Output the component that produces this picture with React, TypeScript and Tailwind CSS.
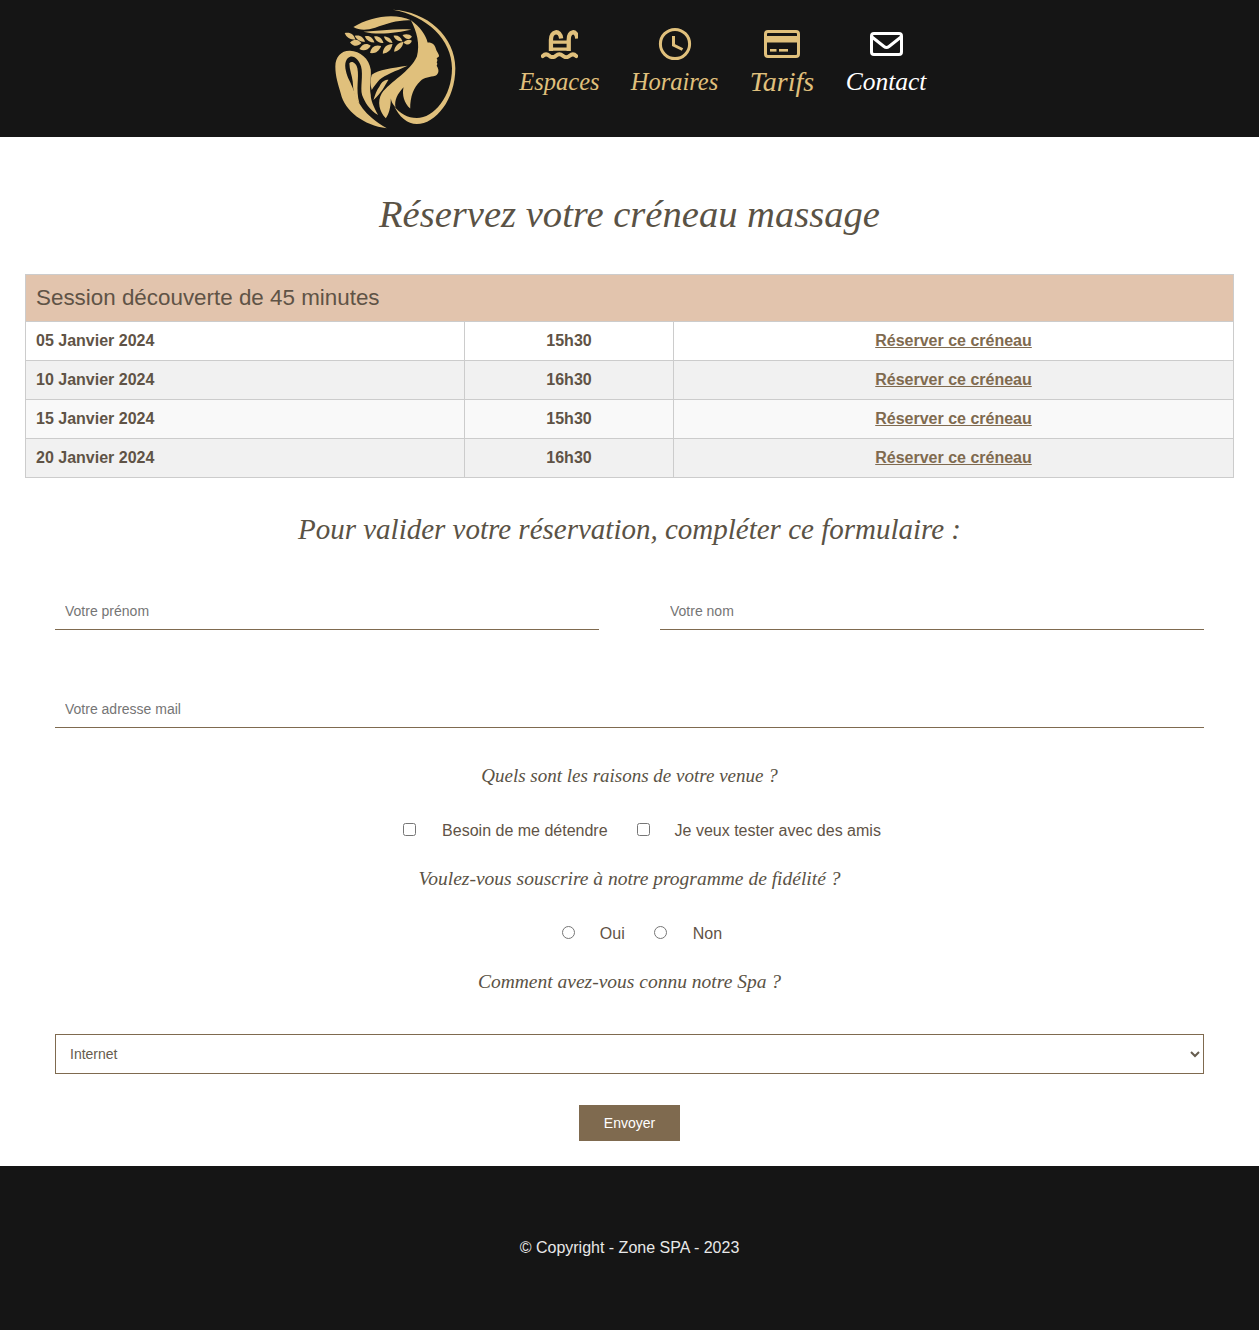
import React from "react";

const script = "font-['Liberation_Serif',serif] italic";

function Logo() {
  return (
    <svg viewBox="45 25 365 365" className="block w-[122px] h-[122px]" fill="#e0c07c">
      {/* outer ring */}
      <path d="M218 30 C320 35 405 110 405 205 C405 300 345 372 290 372 C262 372 236 350 222 318 C238 340 262 354 290 354 C340 354 395 290 395 205 C395 120 320 48 218 30 Z" />
      {/* hair, face and neck */}
      <path d="M272 62 C298 80 318 108 322 128 C335 127 345 135 347 148 C350 158 358 165 356 170 L349 175 C353 180 351 184 349 187 C352 190 351 195 349 198 C356 208 358 222 345 228 C330 232 312 232 300 244 C280 262 270 290 270 326 C252 310 245 285 250 262 C232 282 222 300 226 322 C216 312 214 305 212 296 C212 325 205 345 197 355 C178 335 170 305 185 280 C210 245 270 215 290 170 C300 135 290 95 272 62 Z" />
      {/* top leaf */}
      <path d="M100 82 C150 50 225 38 272 62 C235 60 200 72 165 84 C140 92 118 92 100 82 Z" />
      <path d="M130 96 C180 94 230 86 274 90 C235 97 180 108 130 96 Z" />
      {/* laurel leaves */}
      <path d="M74 100 C90 96 102 104 106 120 C90 120 79 113 74 100 Z" />
      <path d="M90 128 C102 116 114 118 124 130 C112 142 100 140 90 128 Z" />
      <path d="M104 108 C120 104 130 112 135 126 C120 126 110 120 104 108 Z" />
      <path d="M118 148 C126 132 140 128 152 138 C144 152 130 155 118 148 Z" />
      <path d="M134 110 C148 106 158 114 163 128 C150 128 140 122 134 110 Z" />
      <path d="M150 160 C152 142 166 133 183 139 C177 155 166 162 150 160 Z" />
      <path d="M162 110 C176 108 186 116 190 130 C177 130 167 124 162 110 Z" />
      <path d="M188 162 C188 144 200 133 217 133 C214 150 204 160 188 162 Z" />
      <path d="M191 110 C204 110 213 116 217 130 C204 128 195 122 191 110 Z" />
      <path d="M222 156 C222 140 235 128 250 126 C247 142 238 152 222 156 Z" />
      <path d="M220 108 C233 106 242 112 247 125 C233 125 225 120 220 108 Z" />
      <path d="M247 106 C258 101 268 103 275 110 C268 122 256 120 247 106 Z" />
      <path d="M250 128 C258 119 268 118 275 123 C270 136 260 138 250 128 Z" />
      {/* left loop and strands */}
      <path d="M46 200 C46 170 65 152 90 153 C120 155 147 175 152 210 C154 235 147 260 152 285 C152 300 160 320 174 345 C150 332 133 305 126 285 C120 265 130 225 123 200 C118 182 105 168 92 170 C78 174 72 190 78 215 C82 235 92 245 102 275 C112 305 130 345 200 385 C130 375 75 335 62 280 C55 255 46 230 46 200 Z" />
      <path d="M88 190 C96 182 108 190 112 205 C118 235 106 265 118 310 C100 290 100 270 98 245 C96 225 88 210 88 190 Z" />
      {/* inner strands */}
      <path d="M155 225 C175 210 215 205 262 198 C225 215 195 225 178 240 C170 250 160 262 155 270 C150 255 150 240 155 225 Z" />
      <path d="M178 260 C185 245 195 240 205 240 C195 255 185 280 160 300 C165 285 170 270 178 260 Z" />
    </svg>
  );
}

function PoolIcon() {
  return (
    <svg viewBox="663 88 110 88" className="block w-[37px] h-[29px]" fill="none" stroke="#e0c07c">
      <path d="M692 152 V118 C692 90 720 86 723 114" strokeWidth="13" />
      <path d="M746 152 V118 C746 90 770 86 772 114" strokeWidth="13" />
      <path d="M692 125 H746 M692 146 H746" strokeWidth="10" />
      <path d="M667 167 C674 160 680 160 687 166 C694 172 700 172 707 166 C714 160 721 160 728 166 C735 172 742 172 749 166 C756 160 762 160 769 167" strokeWidth="12" strokeLinecap="round" />
    </svg>
  );
}

function ClockIcon() {
  return (
    <svg viewBox="0 0 34 34" className="block w-[34px] h-[34px]" fill="none" stroke="#e0c07c" strokeWidth="3">
      <circle cx="17" cy="17" r="14.6" />
      <path d="M15.5 9 V18 L24.5 22.5" />
    </svg>
  );
}

function CardIcon() {
  return (
    <svg viewBox="0 0 36 28" className="block w-[36px] h-[28px]">
      <rect x="1.5" y="1.5" width="33" height="25" rx="2.5" fill="none" stroke="#e0c07c" strokeWidth="3" />
      <rect x="2" y="6" width="32" height="6.5" fill="#e0c07c" />
      <rect x="6" y="19" width="6.5" height="2.6" fill="#e0c07c" />
      <rect x="15" y="19" width="9" height="2.6" fill="#e0c07c" />
    </svg>
  );
}

function MailIcon() {
  return (
    <svg viewBox="0 0 33 24" className="block w-[33px] h-[24px]" fill="none" stroke="#ffffff" strokeWidth="3">
      <rect x="1.5" y="1.5" width="30" height="21" rx="2.5" />
      <path d="M2 5 L14 14.5 C15.5 15.7 17.5 15.7 19 14.5 L31 5" />
    </svg>
  );
}

function NavItem({ icon, label, width, size, white }: { icon: React.ReactNode; label: string; width: string; size: string; white?: boolean }) {
  return (
    <a className={`flex flex-col items-center ${width} ${white ? "text-white" : "text-[#e0c07c]"}`}>
      <span className="flex h-[30px] items-center">{icon}</span>
      <span className={`${script} ${size} leading-[30px] mt-[8px] whitespace-nowrap`}>{label}</span>
    </a>
  );
}

const rows = [
  ["05 Janvier 2024", "15h30", "bg-white"],
  ["10 Janvier 2024", "16h30", "bg-[#f1f1f1]"],
  ["15 Janvier 2024", "15h30", "bg-[#f9f9f9]"],
  ["20 Janvier 2024", "16h30", "bg-[#f1f1f1]"],
];

export default function App() {
  return (
    <div className="font-['Liberation_Sans',Arial,sans-serif] text-[#5f5346] bg-white min-h-[1330px]">
      <header className="h-[137px] bg-[#151515] flex justify-center items-start">
        <div className="flex items-start ml-[2px]">
          <div className="mt-[8px]"><Logo /></div>
          <nav className="flex ml-[63px] mt-[29px] gap-[31px]">
            <NavItem icon={<PoolIcon />} label="Espaces" width="w-[80px]" size="text-[24.5px]" />
            <NavItem icon={<ClockIcon />} label="Horaires" width="w-[88px]" size="text-[24.5px]" />
            <NavItem icon={<CardIcon />} label="Tarifs" width="w-[65px]" size="text-[28px]" />
            <NavItem icon={<MailIcon />} label="Contact" width="w-[81px]" size="text-[25.5px]" white />
          </nav>
        </div>
      </header>

      <main>
        <h1 className={`${script} h-[137px] flex items-center justify-center text-[#5a5245] text-[38.6px] pt-[18px] font-normal`}>
          Réservez votre créneau massage
        </h1>

        <div className="px-[25px]">
          <table className="w-full table-fixed border-collapse border border-[#cccccc]">
            <colgroup>
              <col className="w-[439px]" />
              <col className="w-[209px]" />
              <col />
            </colgroup>
            <thead>
              <tr className="h-[47px] bg-[#e2c4ad]">
                <th colSpan={3} className="text-left px-[10px] pb-[1px] text-[22.4px] font-normal text-[#5f5346]">
                  Session découverte de 45 minutes
                </th>
              </tr>
            </thead>
            <tbody>
              {rows.map(([d, h, bg]) => (
                <tr key={d} className={`h-[39px] ${bg}`}>
                  <td className="border border-[#cccccc] px-[10px] font-bold text-[16px]">{d}</td>
                  <td className="border border-[#cccccc] px-[10px] font-bold text-[16px] text-center">{h}</td>
                  <td className="border border-[#cccccc] px-[10px] font-bold text-[16px] text-center">
                    <a className="underline text-[#7f6a4f]">Réserver ce créneau</a>
                  </td>
                </tr>
              ))}
            </tbody>
          </table>
        </div>

        <h2 className={`${script} h-[104px] flex items-center justify-center text-[#5a5245] text-[29px] font-normal`}>
          Pour valider votre réservation, compléter ce formulaire :
        </h2>

        <form className="px-[55px]">
          <div className="flex gap-[61px] mt-[10px]">
            <input
              placeholder="Votre prénom"
              className="w-[544px] h-[38px] px-[10px] text-[14px] border-b border-[#7f6a4f] outline-none placeholder:text-[#757575]"
            />
            <input
              placeholder="Votre nom"
              className="w-[544px] h-[38px] px-[10px] text-[14px] border-b border-[#7f6a4f] outline-none placeholder:text-[#757575]"
            />
          </div>
          <input
            placeholder="Votre adresse mail"
            className="block w-full h-[38px] mt-[60px] px-[10px] text-[14px] border-b border-[#7f6a4f] outline-none placeholder:text-[#757575]"
          />

          <h3 className={`${script} h-[46px] mt-[25px] flex items-center justify-center text-[19px] text-[#5a5245] font-normal`}>
            Quels sont les raisons de votre venue ?
          </h3>

          <div className="flex items-center justify-center h-[24px] mt-[20px] pl-[25px] text-[16px]">
            <label className="flex items-center gap-[26px] mr-[29px]">
              <input type="checkbox" className="mb-[3px]" />
              Besoin de me détendre
            </label>
            <label className="flex items-center gap-[25px]">
              <input type="checkbox" className="mb-[3px]" />
              Je veux tester avec des amis
            </label>
          </div>

          <h3 className={`${script} h-[46px] mt-[13px] flex items-center justify-center text-[19.5px] text-[#5a5245] font-normal`}>
            Voulez-vous souscrire à notre programme de fidélité ?
          </h3>

          <div className="flex items-center justify-center h-[24px] mt-[20px] pl-[25px] text-[16px]">
            <label className="flex items-center gap-[25px] mr-[29px]">
              <input type="radio" name="fidelite" className="mb-[3px]" />
              Oui
            </label>
            <label className="flex items-center gap-[26px]">
              <input type="radio" name="fidelite" className="mb-[3px]" />
              Non
            </label>
          </div>

          <h3 className={`${script} h-[46px] mt-[13px] flex items-center justify-center text-[19.5px] text-[#5a5245] font-normal`}>
            Comment avez-vous connu notre Spa ?
          </h3>

          <select className="block w-full h-[40px] mt-[29px] pl-[10px] text-[14px] bg-white border border-[#7f6a4f] text-[#665c4e]">
            <option>Internet</option>
          </select>

          <div className="flex justify-center mt-[31px] pb-[25px]">
            <button type="button" className="w-[101px] h-[36px] bg-[#7f6a4f] text-white text-[14px]">
              Envoyer
            </button>
          </div>
        </form>
      </main>

      <footer className="h-[164px] bg-[#151515] flex items-center justify-center text-[16px] text-[#e8e8e8]">
        © Copyright - Zone SPA - 2023
      </footer>
    </div>
  );
}
